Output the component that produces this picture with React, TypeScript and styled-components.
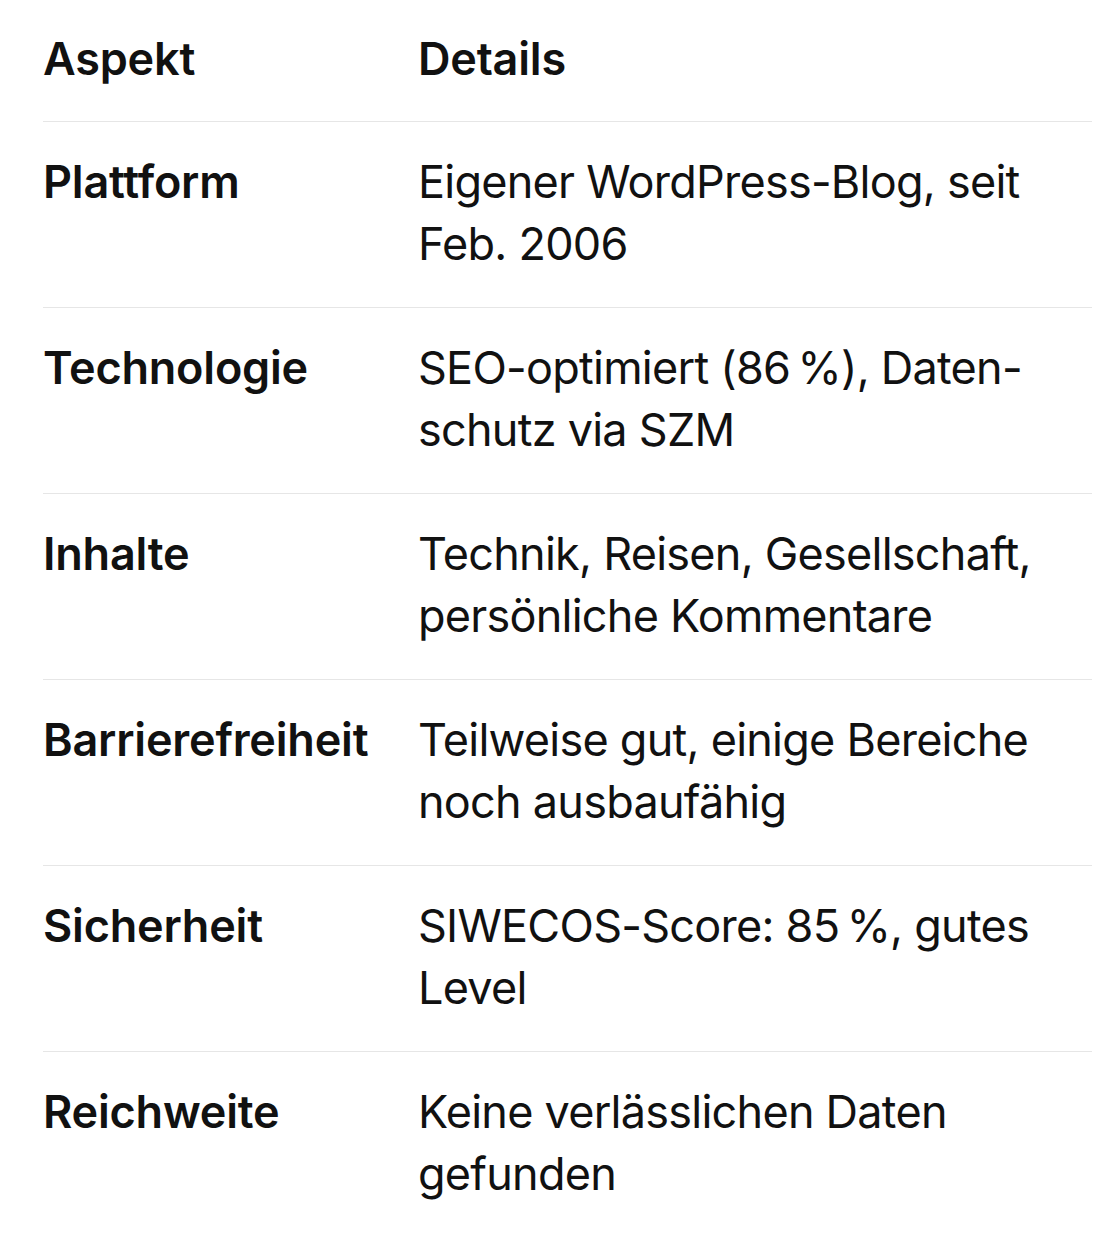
import React from "react";
import styled, { createGlobalStyle } from "styled-components";

const Global = createGlobalStyle`
  html, body { margin: 0; padding: 0; background: #ffffff; }
  body { font-family: Inter, "Noto Sans", "Liberation Sans", sans-serif; color: #111111; -webkit-font-smoothing: antialiased; }
`;

const Page = styled.div`
  padding: 28px 22px 0 43px;
`;

const Table = styled.table`
  width: 1049px;
  border-collapse: collapse;
  table-layout: fixed;
  font-size: 45px;
  line-height: 62px;
`;

const Row = styled.tr<{ $last?: boolean }>`
  border-bottom: ${(p) => (p.$last ? "none" : "1.5px solid #e6e6e6")};
`;

const HeadCell = styled.th<{ $first?: boolean }>`
  text-align: left;
  font-weight: 600;
  letter-spacing: -0.2px;
  padding: 0 0 31px 0;
  width: ${(p) => (p.$first ? "375px" : "auto")};
  vertical-align: top;
`;

const KeyCell = styled.td`
  font-weight: 600;
  letter-spacing: -0.2px;
  padding: 29px 0 32px 0;
  vertical-align: top;
  white-space: nowrap;
`;

const ValueCell = styled.td`
  font-weight: 400;
  letter-spacing: -0.75px;
  padding: 29px 0 32px 0;
  vertical-align: top;
  white-space: nowrap;
`;

const rows: [string, string[]][] = [
  ["Plattform", ["Eigener WordPress-Blog, seit", "Feb. 2006"]],
  ["Technologie", ["SEO-optimiert (86\u2009%), Daten-", "schutz via SZM"]],
  ["Inhalte", ["Technik, Reisen, Gesellschaft,", "persönliche Kommentare"]],
  ["Barrierefreiheit", ["Teilweise gut, einige Bereiche", "noch ausbaufähig"]],
  ["Sicherheit", ["SIWECOS-Score: 85\u2009%, gutes", "Level"]],
  ["Reichweite", ["Keine verlässlichen Daten", "gefunden"]],
];

export default function App() {
  return (
    <>
      <Global />
      <Page>
        <Table>
          <thead>
            <Row>
              <HeadCell $first>Aspekt</HeadCell>
              <HeadCell>Details</HeadCell>
            </Row>
          </thead>
          <tbody>
            {rows.map(([k, v], i) => (
              <Row key={k} $last={i === rows.length - 1}>
                <KeyCell>{k}</KeyCell>
                <ValueCell>
                  {v[0]}
                  <br />
                  {v[1]}
                </ValueCell>
              </Row>
            ))}
          </tbody>
        </Table>
      </Page>
    </>
  );
}
